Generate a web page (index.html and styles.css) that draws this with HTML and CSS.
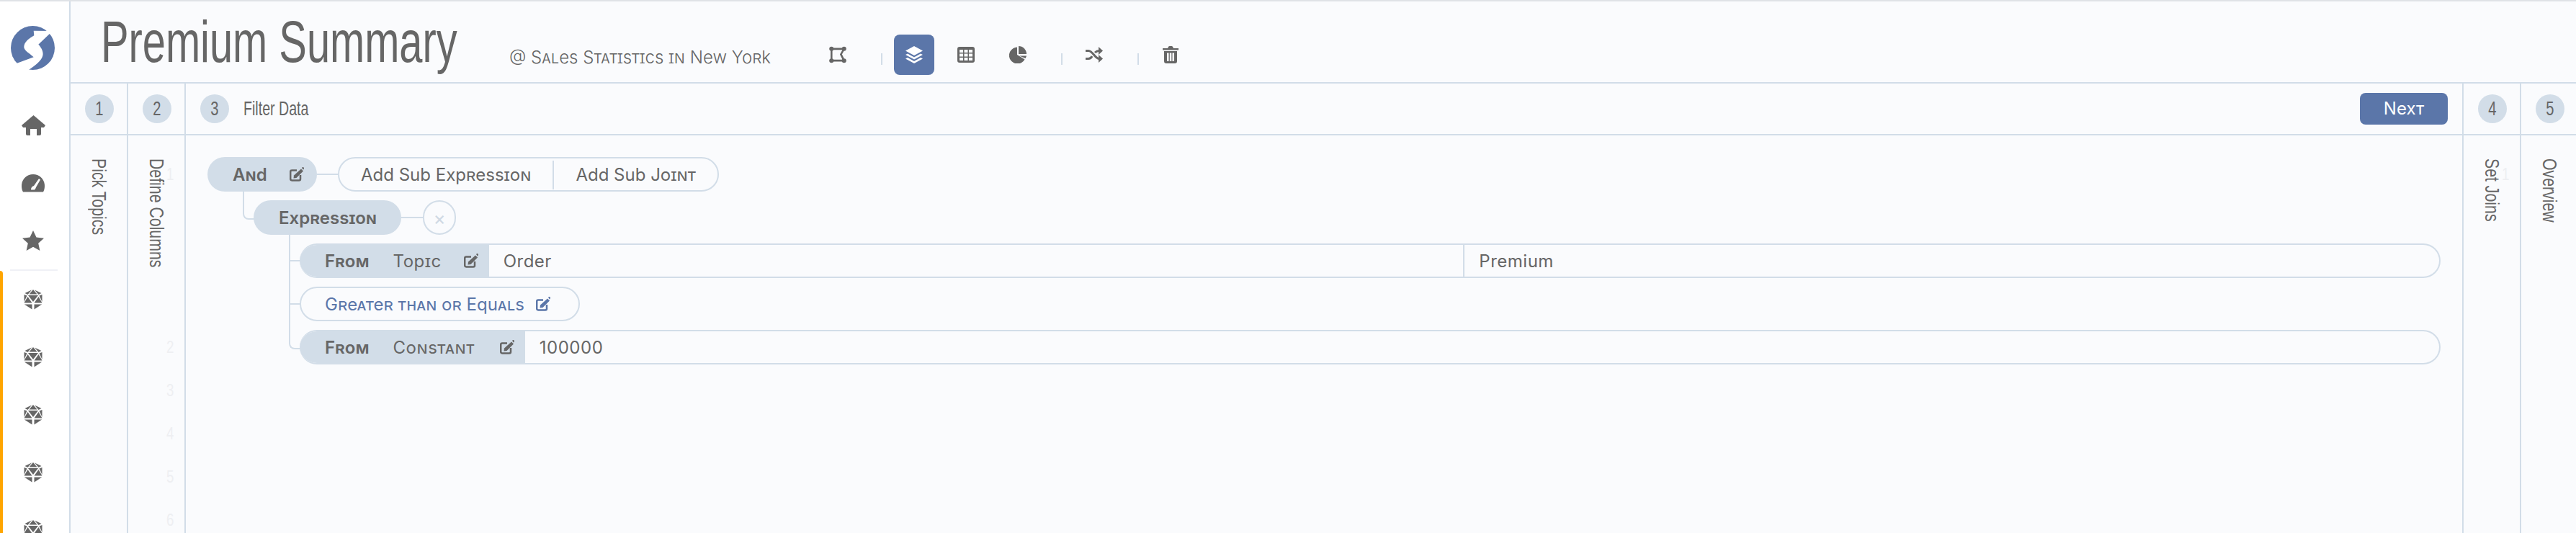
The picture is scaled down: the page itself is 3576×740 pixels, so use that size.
FILE: index.html
```html
<!DOCTYPE html>
<html lang="en">
<head>
<meta charset="utf-8">
<title>Premium Summary</title>
<link rel="stylesheet" href="styles.css">
</head>
<body>
<div class="app">
  <aside class="side">
    <div class="logo">
      <svg viewBox="0 0 61 61" width="61" height="61"><circle cx="30.500" cy="30.500" r="30.500" fill="#5b76a9"/><path fill="#fff" d="M31.700 6.700 58 7 38.300 25.700 35 22.300C40 27 46 34 44.300 41.300 43 48 33 56 21.700 63L8 52 31.700 43.300C26 38 18 34 18.300 29 18.500 22 26 17 32.300 13.300z"/></svg>
    </div>
    <a class="nav"><svg class="ic-home" viewBox="0 0 33 28"><path fill="#666" d="M16.500 0 33 14 31 17H27V26Q27 28 25 28H21V19H12V28H8Q6 28 6 26V17H2L0 14z"/></svg></a>
    <a class="nav"><svg class="ic-gauge" viewBox="0 0 32 25"><path fill="#666" fill-rule="evenodd" d="M16 0C7 0 0 7 0 16c0 3 .5 6 2 8.500h28c1.500-2.500 2-5.500 2-8.500C32 7 25 0 16 0zM24 6l2 1.500-6 10.500q-1 3-2 3.500H13Q13 17 17 16z"/></svg></a>
    <a class="nav"><svg class="ic-star" viewBox="0 0 32 28"><path fill="#666" d="M16 0l4.500 9.500 10.500 1.200-7.800 7 2.200 10.300-9.400-5.300L6.600 28l2.200-10.300-7.800-7 10.500-1.200z"/></svg></a>
    <div class="rule"></div>
    <div class="fav">
      <a class="nav"><svg class="ic-d20" viewBox="0 0 26 28"><use href="#d20"/></svg></a>
      <a class="nav"><svg class="ic-d20" viewBox="0 0 26 28"><use href="#d20"/></svg></a>
      <a class="nav"><svg class="ic-d20" viewBox="0 0 26 28"><use href="#d20"/></svg></a>
      <a class="nav"><svg class="ic-d20" viewBox="0 0 26 28"><use href="#d20"/></svg></a>
      <a class="nav"><svg class="ic-d20" viewBox="0 0 26 28"><use href="#d20"/></svg></a>
    </div>
  </aside>

  <main class="main">
    <header class="head">
      <h1 class="title"><span>Premium Summary</span></h1>
      <span class="sub">@ Sales Statistics in New York</span>
      <div class="tools">
        <button class="tool"><svg class="ic" viewBox="0 0 22 21"><path fill="none" stroke="#666" stroke-width="2.400" d="M3 3h16l-4 7 4 8H3z"/><g fill="#666"><circle cx="3" cy="3" r="2.800"/><circle cx="19" cy="3" r="2.800"/><circle cx="3" cy="18" r="2.800"/><circle cx="19" cy="18" r="2.800"/></g></svg></button>
        <i class="sep"></i>
        <button class="tool on"><svg class="ic" viewBox="0 0 24 24"><path fill="#fff" d="M12 0 24 6.500 12 13 0 6.500z"/><path fill="#fff" d="M3 10.500 12 15.500 21 10.500 24 12 12 18.500 0 12z"/><path fill="#fff" d="M3 16 12 21 21 16 24 17.500 12 24 0 17.500z"/></svg></button>
        <button class="tool"><svg class="ic" viewBox="0 0 24 22"><rect width="24" height="22" rx="3" fill="#666"/><g fill="#f9fafc"><rect x="3" y="4" width="5" height="4"/><rect x="9.500" y="4" width="5" height="4"/><rect x="16" y="4" width="5" height="4"/><rect x="3" y="9.500" width="5" height="4"/><rect x="9.500" y="9.500" width="5" height="4"/><rect x="16" y="9.500" width="5" height="4"/><rect x="3" y="15" width="5" height="4"/><rect x="9.500" y="15" width="5" height="4"/><rect x="16" y="15" width="5" height="4"/></g></svg></button>
        <button class="tool"><svg class="ic" viewBox="0 0 24 24"><path fill="#666" d="M11 1.500A11.500 11.500 0 1 0 21.500 18.500L11 12z"/><path fill="#666" d="M13 0A11 11 0 0 1 24 11H13z"/><path fill="#666" d="M14 13.500 24 13.500A11 11 0 0 1 22.500 17z"/></svg></button>
        <i class="sep"></i>
        <button class="tool"><svg class="ic" viewBox="0 0 24 22"><path fill="none" stroke="#666" stroke-width="3" d="M0 5.500h4c6 0 9 11 15 11M0 16.500h4c2.500 0 4-1.500 5-3.500M13 8c1.500-1.500 3-2.500 6-2.500"/><path fill="#666" d="M18 0l6 5.500-6 5.500zM18 11l6 5.500-6 5.500z"/></svg></button>
        <i class="sep"></i>
        <button class="tool"><svg class="ic" viewBox="0 0 22 24"><path fill="#666" fill-rule="evenodd" d="M0 3h7l1-2q.500-1 1.500-1h3q1 0 1.500 1l1 2h7v2.500H0zM2 7h18v14q0 3-3 3H5q-3 0-3-3zM6 9.500v11.500h2.500V9.500zM9.800 9.500v11.500h2.500V9.500zM13.500 9.500v11.500H16V9.500z"/></svg></button>
      </div>
    </header>

    <div class="steps">
      <section class="col">
        <div class="col-head"><span class="num"><span>1</span></span></div>
        <div class="col-body"><span class="vlabel">Pick Topics</span></div>
      </section>
      <section class="col">
        <div class="col-head"><span class="num"><span>2</span></span></div>
        <div class="col-body">
          <span class="vlabel">Define Columns</span>
          <div class="gutter"><b>1</b><b>2</b><b>3</b><b>4</b><b>5</b><b>6</b></div>
        </div>
      </section>
      <section class="col active">
        <div class="col-head">
          <span class="num"><span>3</span></span><span class="step-name"><span>Filter Data</span></span>
          <button class="next">Next</button>
        </div>
        <div class="col-body tree">
          <div class="row">
            <div class="pill joint"><span class="kw">And</span><svg class="edit"><use href="#edit"/></svg></div>
            <i class="link short"></i>
            <div class="outline add"><span>Add Sub Expression</span><span>Add Sub Joint</span></div>
          </div>
          <div class="row level1">
            <div class="pill expr"><span class="kw">Expression</span></div>
            <i class="link"></i>
            <div class="outline close">×</div>
          </div>
          <div class="row level2">
            <div class="factor">
              <div class="factor-kind"><span class="kw">From</span><span class="kind">Topic</span><svg class="edit"><use href="#edit"/></svg></div>
              <div class="val half">Order</div>
              <div class="val half">Premium</div>
            </div>
          </div>
          <div class="row level2">
            <div class="outline op"><span>Greater than or Equals</span><svg class="edit"><use href="#edit"/></svg></div>
          </div>
          <div class="row level2 last">
            <div class="factor">
              <div class="factor-kind"><span class="kw">From</span><span class="kind wide">Constant</span><svg class="edit"><use href="#edit"/></svg></div>
              <div class="val">100000</div>
            </div>
          </div>
        </div>
      </section>
      <section class="col end">
        <div class="col-head"><span class="num"><span>4</span></span></div>
        <div class="col-body">
          <span class="vlabel">Set Joins</span>
          <div class="gutter"><b>1</b></div>
        </div>
      </section>
      <section class="col end tail">
        <div class="col-head"><span class="num"><span>5</span></span></div>
        <div class="col-body"><span class="vlabel">Overview</span></div>
      </section>
    </div>
  </main>
</div>

<svg class="defs" width="0" height="0">
  <defs>
    <symbol id="edit" viewBox="0 0 20 20">
      <path fill="none" stroke="currentColor" stroke-width="2.500" d="M15 11v5.500q0 2-2 2H3.200q-2 0-2-2V6.500q0-2 2-2H10"/>
      <path fill="currentColor" d="M16 2.500 19 5.500 9.500 15 5.500 15.500 6 11.500z"/>
      <path fill="currentColor" d="M17 1l1-1q.500-.500 1 0l1 1q.500.500 0 1l-1 1.800z"/>
    </symbol>
    <symbol id="d20" viewBox="0 0 26 28">
      <g fill="#666">
        <path d="M13 0 18.500 6.500H7.500z"/><path d="M11 .5 5.500 7 1.500 5z"/><path d="M15 .5 20.500 7 24.500 5z"/>
        <path d="M6 8H20L13 17z"/>
        <path d="M.5 7 4.500 8.500 .5 17z"/><path d="M25.500 7 21.500 8.500 25.500 17z"/>
        <path d="M5.500 10 11.500 18.500H.5z"/><path d="M20.500 10 25.500 18.500H14.500z"/>
        <path d="M.8 20.500 11.500 20.500 11.500 27.500z"/><path d="M25.200 20.500 14.500 20.500 14.500 27.500z"/>
      </g>
    </symbol>
  </defs>
</svg>
</body>
</html>
```
FILE: styles.css
```css
* { box-sizing: border-box; }
html, body { margin: 0; height: 100%; overflow: hidden; }
body { font-family: Inter, "Liberation Sans", sans-serif; color: #666; background: #fafbfd; }
.defs { position: absolute; }
.app { display: flex; height: 740px; border-top: 2px solid #dfe2e6; overflow: hidden; }

.side { width: 98px; flex: none; background: #fff; border-right: 2px solid #d2dde8; overflow: hidden; }
.logo { height: 132px; display: flex; padding: 34px 0 0 15px; }
.nav { height: 80px; display: flex; align-items: center; justify-content: center; padding-right: 4px; }
.ic-home { width: 33px; height: 28px; }
.ic-gauge { width: 32px; height: 25px; }
.ic-star { width: 32px; height: 28px; }
.ic-d20 { width: 26px; height: 28px; }
.rule { height: 2px; margin: 0 16px 0 14px; background: #f0f1f6; }
.fav { position: relative; }
.fav::before { content: ""; position: absolute; left: 0; top: 0; bottom: 0; width: 4px; background: #ffa500; border-top-right-radius: 4px; }

.main { flex: 1; min-width: 0; display: flex; flex-direction: column; }
.head { height: 114px; flex: none; display: flex; align-items: flex-end; padding: 0 0 10px 42px; border-bottom: 2px solid #d2dde8; }
.title { width: 493px; flex: none; margin: 0 0 1px; font: 400 82px/90px "Liberation Sans", sans-serif; color: #666; white-space: nowrap; }
.title span { display: inline-block; transform: scaleX(.705); transform-origin: left center; }
.sub { margin: 0 65px 10px 74px; font: 300 24px/28px Inter, sans-serif; font-variant: small-caps; white-space: nowrap; }
.tools { display: flex; align-items: center; gap: 16px; }
.tool { width: 56px; height: 56px; padding: 0; border: 0; border-radius: 8px; background: transparent; display: flex; align-items: center; justify-content: center; }
.tool.on { background: #5b76a9; }
.ic { width: 24px; height: 24px; }
.sep { width: 2px; height: 16px; margin: 12px 0 0 16px; background: #d2dde8; }

.steps { flex: 1; min-height: 0; display: flex; }
.col { width: 80px; flex: none; display: flex; flex-direction: column; border-right: 2px solid #d2dde8; }
.col.active { flex: 1; width: auto; min-width: 0; }
.col.end { width: 78px; border-right: 0; }
.col.tail { border-left: 2px solid #d2dde8; }
.col-head { height: 72px; flex: none; display: flex; align-items: center; padding-left: 20px; border-bottom: 2px solid #d2dde8; }
.num { width: 40px; height: 40px; flex: none; border-radius: 50%; background: #d2dde8; display: flex; align-items: center; justify-content: center; font: 400 28px/40px "Liberation Sans", sans-serif; color: #666; }
.num span { display: block; transform: scaleX(.72); }
.step-name { width: 91px; flex: none; margin-left: 20px; font: 400 28px/40px "Liberation Sans", sans-serif; color: #666; white-space: nowrap; }
.step-name span { display: inline-block; transform: scaleX(.7); transform-origin: left center; }
.next { margin-left: auto; margin-right: 20px; width: 122px; height: 44px; border: 0; border-radius: 8px; background: #5b76a9; color: #fff; font: 400 24px/44px Inter, sans-serif; font-variant: small-caps; padding: 0; }
.col-body { flex: 1; min-height: 0; position: relative; padding: 32px 0 0 24px; }
.vlabel { display: block; writing-mode: vertical-rl; font: 400 28px/30px "Liberation Sans", sans-serif; color: #666; white-space: nowrap; transform: scaleY(.76); transform-origin: left top; }
.gutter { position: absolute; top: 42px; right: 15px; display: flex; flex-direction: column; align-items: flex-end; gap: 36px; }
.gutter b { height: 24px; font: 400 24px/24px "Liberation Sans", sans-serif; color: #eeeff2; transform: scaleX(.78); transform-origin: right center; }
.gutter b:first-child { margin-bottom: 180px; }

.tree { padding: 30px 30px 0 30px; display: flex; flex-direction: column; gap: 12px; }
.row { display: flex; align-items: center; position: relative; height: 48px; flex: none; }
.level1 { margin-left: 64px; }
.level2 { margin-left: 128px; }
.level1::before { content: ""; position: absolute; left: -15px; top: -12px; width: 15px; height: 37px; border: solid #d2dde8; border-width: 0 0 2px 2px; border-bottom-left-radius: 8px; }
.level2::before { content: ""; position: absolute; left: -15px; top: -12px; height: 60px; border-left: 2px solid #d2dde8; }
.level2::after { content: ""; position: absolute; left: -15px; top: 23px; width: 15px; height: 2px; background: #d2dde8; }
.level2.last::before { width: 15px; height: 37px; border-bottom: 2px solid #d2dde8; border-bottom-left-radius: 8px; }
.level2.last::after { display: none; }
.pill, .factor-kind { background: #d2dde8; color: #666; display: flex; align-items: center; padding-top: 2px; }
.pill { height: 48px; border-radius: 24px; }
.kw { font: 600 24px/44px Inter, sans-serif; font-variant: small-caps; color: #666; white-space: nowrap; }
.joint { width: 152px; padding-left: 35px; justify-content: space-between; padding-right: 18px; }
.expr { width: 205px; padding-left: 35px; }
.edit { width: 20px; height: 20px; flex: none; color: #666; margin-bottom: 3px; }
.link { width: 30px; height: 2px; background: #d2dde8; flex: none; }
.link.short { width: 29px; }
.outline { height: 48px; border: 2px solid #d2dde8; border-radius: 24px; display: flex; align-items: center; padding-top: 2px; font: 400 24px/40px Inter, sans-serif; font-variant: small-caps; color: #666; white-space: nowrap; }
.add span { padding: 0 30px; }
.add span + span { border-left: 2px solid #d2dde8; }
.close { width: 46px; justify-content: center; font-size: 26px; color: #cfd9e4; font-variant: normal; }
.op { color: #5b76a9; padding-left: 33px; width: 389px; }
.op .edit { color: #5b76a9; margin-left: 16px; }
.factor { flex: 1; min-width: 0; height: 48px; display: flex; border: 2px solid #d2dde8; border-left: 0; border-radius: 24px; overflow: hidden; }
.factor-kind { height: 48px; margin-top: -2px; padding: 2px 15px 0 35px; flex: none; }
.kind { margin-left: 33px; font: 400 24px/44px Inter, sans-serif; letter-spacing: .5px; font-variant: small-caps; white-space: nowrap; }
.kind.wide { margin-right: 4px; }
.factor-kind .edit { margin-left: 31px; }
.val { padding: 2px 0 0 20px; font: 400 24px/42px Inter, sans-serif; letter-spacing: .5px; color: #666; }
.val.half { flex: 1 1 0; }
.val.half + .val.half { border-left: 2px solid #d2dde8; }
```
